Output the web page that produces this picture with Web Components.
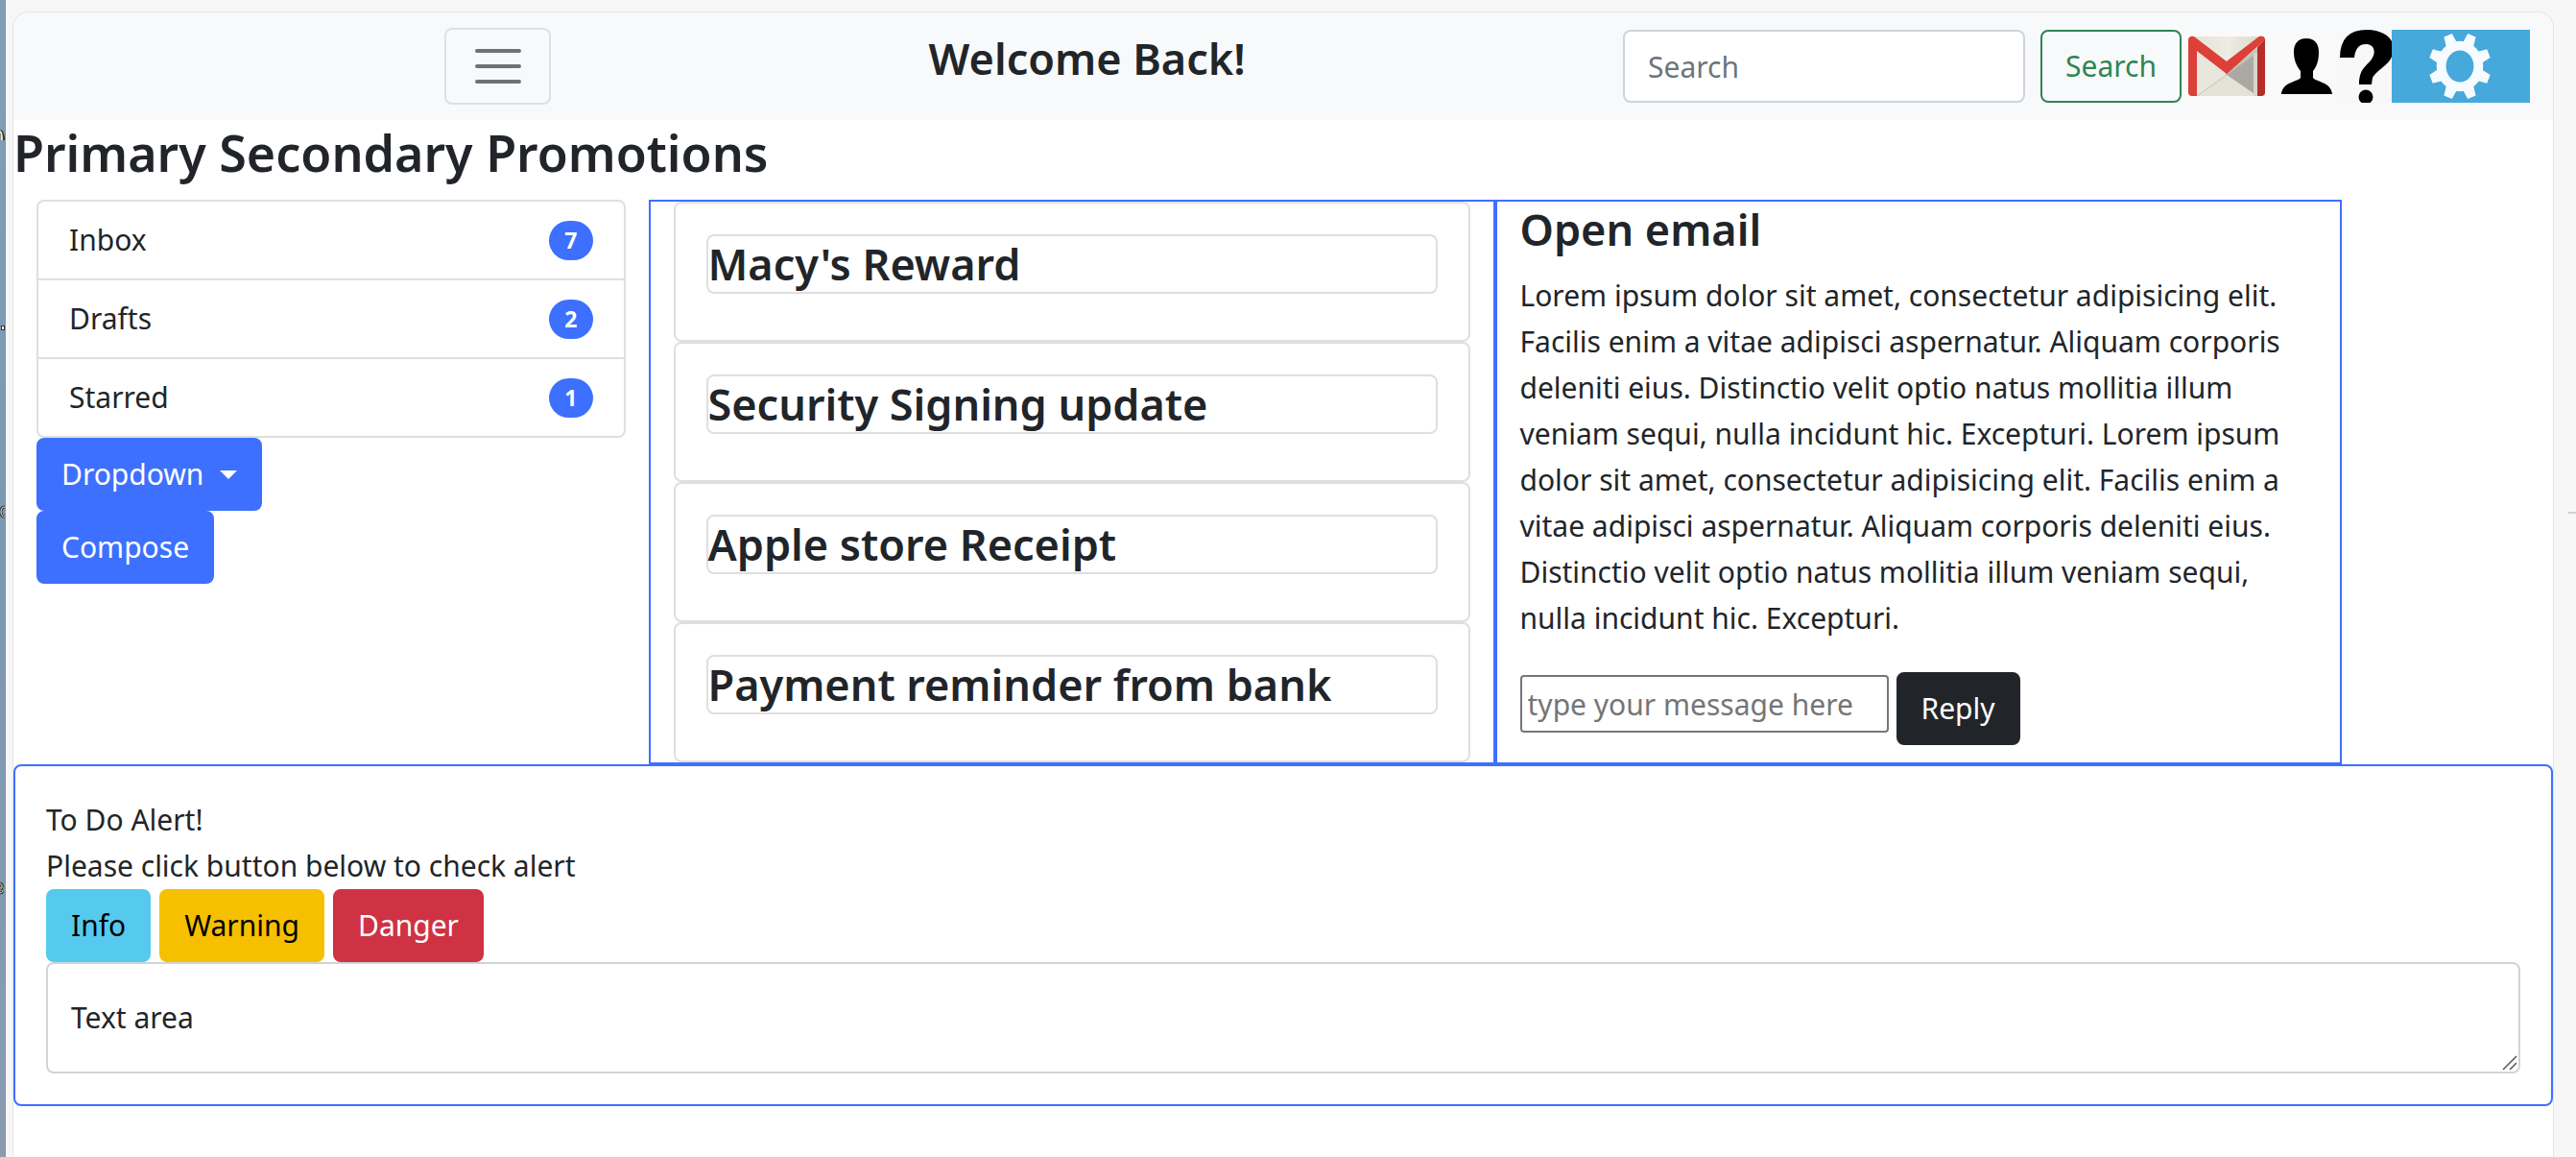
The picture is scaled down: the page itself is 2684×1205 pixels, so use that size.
<!DOCTYPE html>
<html lang="en">
<head>
<meta charset="utf-8">
<meta name="viewport" content="width=device-width, initial-scale=1">
<title>Mail</title>
<style>
html { height: 100%; }
body {
  margin: 0; min-height: 100vh; display: flex; background: #f7f7f7;
  font: 400 30px/48px "Noto Sans", "Open Sans", sans-serif; color: #212529;
  overflow: hidden;
}
</style>
</head>
<body>
<mail-app></mail-app>

<template id="t-app">
<style>
:host { display: flex; flex: 1; min-width: 0; }
desk-edge { flex: none; }
main { flex: 1; min-width: 0; margin: 12px 0 0 7px; border: 1px solid #e5e5e6; border-bottom: 0;
  border-radius: 17px 17px 0 0; background: #fff; overflow: hidden; }
.gutter { flex: none; display: flex; justify-content: flex-end; width: 23px; padding-top: 533px; }
.gutter hr { width: 8px; height: 2px; margin: 0; border: 0; background: #d0d0d0; }
h1 { margin: 0 0 16px; font-size: 52px; line-height: 67px; font-weight: 600; }
.row { display: grid; grid-template-columns: repeat(12, 1fr); }
.side { grid-column: span 3; padding: 0 24px; }
.pane { grid-column: span 4; border: 2px solid #3d70ff; padding: 0 24px; }
.stack { display: flex; flex-direction: column; align-items: flex-start; }
h2 { margin: 0 0 16px; font-size: 45px; line-height: 58px; font-weight: 600; }
p { margin: 0 0 32px; padding-right: 16px; }
.reply { display: flex; align-items: flex-start; gap: 8px; }
.reply input { box-sizing: border-box; width: 384px; height: 60px; margin-top: 3px; padding: 2px 6px; border: 2px solid #767676; border-radius: 4px; font: inherit; color: inherit; }
.reply input::placeholder { color: #757575; opacity: 1; }
</style>
<desk-edge></desk-edge>
<main>
  <nav-bar heading="Welcome Back!"></nav-bar>
  <h1>Primary Secondary Promotions</h1>
  <div class="row">
    <div class="side">
      <folder-list>
        <folder-item count="7">Inbox</folder-item>
        <folder-item count="2">Drafts</folder-item>
        <folder-item count="1">Starred</folder-item>
      </folder-list>
      <div class="stack">
        <ui-button kind="primary" caret>Dropdown</ui-button>
        <ui-button kind="primary">Compose</ui-button>
      </div>
    </div>
    <div class="pane">
      <mail-card>Macy's Reward</mail-card>
      <mail-card>Security Signing update</mail-card>
      <mail-card>Apple store Receipt</mail-card>
      <mail-card>Payment reminder from bank</mail-card>
    </div>
    <div class="pane">
      <h2>Open email</h2>
      <p>Lorem ipsum dolor sit amet, consectetur adipisicing elit. Facilis enim a vitae adipisci aspernatur. Aliquam corporis deleniti eius. Distinctio velit optio natus mollitia illum veniam sequi, nulla incidunt hic. Excepturi. Lorem ipsum dolor sit amet, consectetur adipisicing elit. Facilis enim a vitae adipisci aspernatur. Aliquam corporis deleniti eius. Distinctio velit optio natus mollitia illum veniam sequi, nulla incidunt hic. Excepturi.</p>
      <div class="reply">
        <input type="text" placeholder="type your message here" aria-label="Message">
        <ui-button kind="dark">Reply</ui-button>
      </div>
    </div>
  </div>
  <todo-card></todo-card>
</main>
<div class="gutter"><hr></div>
</template>

<template id="t-edge">
<style>
:host { display: block; width: 5px; background: linear-gradient(#7f9fb8, #7c98b2 50%, #8a9bb2); border-right: 1px solid #8a8f96; }
svg { display: block; width: 5px; height: 1205px; }
</style>
<svg viewBox="0 0 5 1205" fill="none" aria-hidden="true">
  <path d="M0 137q3 1 3 9" stroke="#3a3024" stroke-width="4"/><path d="M0 137q2 1 2 9" stroke="#f5e3bd" stroke-width="2"/>
  <path d="M1 339h4v5h-4z" fill="#30343a"/><path d="M2 340h2v3h-2z" fill="#f2f2f2"/>
  <path d="M5 528q-4 0-4 5t4 5" stroke="#333" stroke-width="3"/><path d="M5 528q-4 0-4 5t4 5" stroke="#f2f2f2"/>
  <path d="M0 920q3 1 2 5H0m0 5q2 0 3-2" stroke="#333" stroke-width="3"/><path d="M0 920q3 1 2 5H0m0 5q2 0 3-2" stroke="#f0e4cc"/>
</svg>
</template>

<template id="t-nav">
<style>
:host { display: block; background: #f8f9fb; }
nav { display: flex; align-items: center; justify-content: space-between; padding: 16px 24px; }
.brand { width: 32px; }
.toggle { box-sizing: border-box; width: 111px; height: 80px; padding: 0; display: grid; place-items: center;
  border: 2px solid #dfe0e1; border-radius: 8px; background: none; }
.toggle svg { width: 60px; height: 60px; display: block; }
h2 { margin: 0 0 16px; font-size: 45px; line-height: 58px; font-weight: 600; }
form { display: flex; align-items: center; }
input { box-sizing: border-box; width: 419px; height: 76px; margin-right: 16px; padding: 0 24px; border: 2px solid #ced4da; border-radius: 8px; background: #fff; font: inherit; color: inherit; }
input::placeholder { color: #6c757d; opacity: 1; }
.icons { display: flex; }
.icons a, .icons svg { display: block; height: 76px; }
</style>
<nav>
  <span class="brand"></span>
  <button class="toggle" type="button" aria-label="Toggle navigation">
    <svg viewBox="0 0 30 30"><path stroke="#707173" stroke-width="2" stroke-linecap="round" stroke-miterlimit="10" d="M4 7h22M4 15h22M4 23h22"/></svg>
  </button>
  <h2></h2>
  <form>
    <input type="search" placeholder="Search" aria-label="Search">
    <ui-button kind="outline">Search</ui-button>
    <div class="icons">
      <a href="#mail" aria-label="Mail"><svg width="94" height="76" viewBox="0 0 94 76">
        <defs><linearGradient id="g1" x1="0" x2="1"><stop offset="0" stop-color="#e6dfd5"/><stop offset=".5" stop-color="#eeede3"/><stop offset="1" stop-color="#d9d7c9"/></linearGradient></defs>
        <rect width="94" height="76" fill="#fafafb"/>
        <rect x="8" y="7" width="79" height="62" rx="4" fill="url(#g1)"/>
        <path d="M79 19v50H16z" fill="#c3c2b8"/><path d="M79 24v45L47 47z" fill="#abaaa2"/>
        <path d="M16 69l31-22 32 22z" fill="#e4e3d8"/><path d="M16 22v47l31-22z" fill="#e9e6dd"/>
        <path d="M16 69l31-22" stroke="#c8c5ba" fill="none"/>
        <path d="M75 24h4v45h-4z" fill="#d8d5d0"/>
        <path d="M7 10q1-4 6-3l34 26L81 7q5-1 6 3L47 46 16 22v47h-5q-4 0-4-4z" fill="#dc4139"/>
        <path d="M79 18l8-8v55q0 4-4 4h-4z" fill="#b62d28"/><path d="M47 46L87 10q-1-4-6-3L47 33z" fill="#dc4139"/>
      </svg></a>
      <a href="#account" aria-label="Account"><svg width="71" height="76" viewBox="0 0 71 76">
        <rect width="71" height="76" fill="#f9f9fa"/>
        <path d="M36 9c9 0 13 6 13 14 0 9-2 15-6 20v7c2 4 19 4 20 17H10c1-13 18-13 20-17v-7c-4-5-7-11-7-20 0-8 4-14 13-14z" fill="#000"/>
      </svg></a>
      <a href="#help" aria-label="Help"><svg width="54" height="76" viewBox="0 0 54 76">
        <rect width="54" height="76" fill="#f8f8f8"/>
        <path d="M0 29Q0 0 28 0C42 0 51 6 54 12V28C51 37 37 43 34 50L33 57H20C20 42 26 39 32 32 38 25 37 15 27 15 19 15 16 21 15 29z" fill="#000"/>
        <circle cx="27" cy="70" r="7.500" fill="#000"/>
      </svg></a>
      <a href="#settings" aria-label="Settings"><svg width="144" height="76" viewBox="0 0 144 76">
        <rect width="144" height="76" fill="#46a8db"/>
        <g transform="translate(71 38) scale(.9 .97)" fill="#f6fbff">
          <g id="teeth"></g>
          <path fill-rule="evenodd" d="M0-27A27 27 0 1 1 0 27A27 27 0 1 1 0-27zM0-17A16 17 0 1 0 0 17A16 17 0 1 0 0-17z"/>
        </g>
      </svg></a>
    </div>
  </form>
</nav>
</template>

<template id="t-button">
<style>
:host { display: inline-flex; }
button { display: flex; align-items: center; height: 76px; padding: 0 24px; border: 2px solid var(--edge, var(--fill)); border-radius: 8px;
  background: var(--fill); color: var(--ink, #fff); font: inherit; cursor: pointer; white-space: nowrap; }
:host([kind=primary]) { --fill: #3d70ff; }
:host([kind=dark]) { --fill: #212529; }
:host([kind=info]) { --fill: #55caee; --ink: #000; }
:host([kind=warning]) { --fill: #f6c000; --ink: #000; }
:host([kind=danger]) { --fill: #cf3243; }
:host([kind=outline]) { --fill: transparent; --edge: #2f8553; --ink: #2f8553; }
i { display: none; margin-left: 17px; border: 9px solid transparent; border-top-color: currentColor; border-bottom: 0; }
:host([caret]) i { display: block; }
</style>
<button type="button"><slot></slot><i></i></button>
</template>

<template id="t-list">
<style>:host { display: block; border: 2px solid #dfdfdf; border-radius: 8px; }</style>
<slot></slot>
</template>

<template id="t-item">
<style>
:host { display: flex; align-items: center; justify-content: space-between; padding: 16px 32px; border-bottom: 2px solid #dfdfdf; }
:host(:last-child) { border-bottom: 0; }
b { padding: 0 16px; border-radius: 21px; background: #3d70ff; color: #fff; font-size: 23px; line-height: 41px; font-weight: 700; }
</style>
<slot></slot><b></b>
</template>

<template id="t-card">
<style>
:host { display: block; border: 2px solid #dfdfdf; border-radius: 8px; padding: 32px 32px 48px; }
h2 { margin: 0; font-size: 45px; line-height: 58px; font-weight: 600; border: 2px solid #dfdfdf; border-radius: 8px; white-space: nowrap; }
</style>
<h2><slot></slot></h2>
</template>

<template id="t-todo">
<style>
:host { display: block; border: 2px solid #3d70ff; border-radius: 8px; padding: 32px; }
.buttons { display: flex; gap: 9px; }
.area { position: relative; display: flex; }
textarea { box-sizing: border-box; width: 100%; height: 116px; padding: 32px 24px; border: 2px solid #ced4da; border-radius: 8px; font: inherit; color: inherit; resize: vertical; }
textarea::placeholder { color: #212529; opacity: 1; }
textarea::-webkit-resizer { display: none; }
svg { position: absolute; right: 2px; bottom: 2px; pointer-events: none; }
</style>
<div>To Do Alert!</div>
<div>Please click button below to check alert</div>
<div class="buttons">
  <ui-button kind="info">Info</ui-button>
  <ui-button kind="warning">Warning</ui-button>
  <ui-button kind="danger">Danger</ui-button>
</div>
<div class="area">
  <textarea placeholder="Text area" aria-label="Text area"></textarea>
  <svg width="17" height="17" viewBox="0 0 17 17" stroke="#555" stroke-width="1.500"><path d="M1 15L15 1M8 15l7-7"/></svg>
</div>
</template>

<script>
function define(name, templateId, setup) {
  customElements.define(name, class extends HTMLElement {
    constructor() {
      super();
      this.attachShadow({ mode: "open" }).append(document.getElementById(templateId).content.cloneNode(true));
    }
    connectedCallback() { if (setup) setup(this, this.shadowRoot); }
  });
}
define("desk-edge", "t-edge");
define("ui-button", "t-button");
define("folder-list", "t-list");
define("folder-item", "t-item", (el, root) => { root.querySelector("b").textContent = el.getAttribute("count"); });
define("mail-card", "t-card");
define("todo-card", "t-todo");
define("nav-bar", "t-nav", (el, root) => {
  root.querySelector("h2").textContent = el.getAttribute("heading");
  // eight gear teeth, offset half a step from vertical
  root.querySelector("#teeth").innerHTML = Array.from({ length: 8 }, (_, i) =>
    `<path transform="rotate(${22.5 + i * 45})" d="M-7-22L-5-36H5L7-22z"/>`).join("");
});
define("mail-app", "t-app");
</script>
</body>
</html>
